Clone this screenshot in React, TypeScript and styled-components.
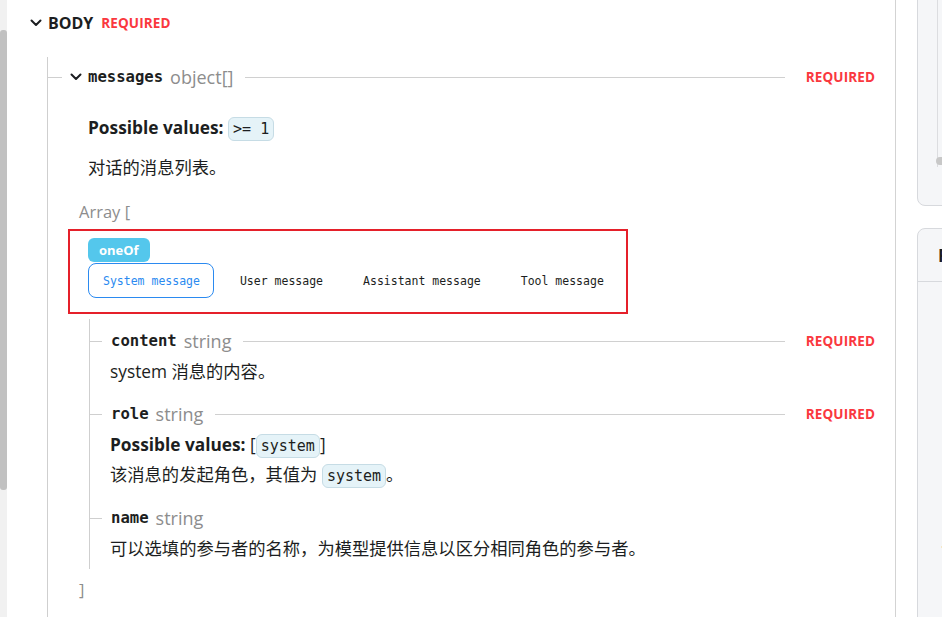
import React from 'react';
import styled, { createGlobalStyle } from 'styled-components';

const SANS = `"Open Sans", "Noto Sans CJK SC", sans-serif`;
const MONO = `"DejaVu Sans Mono", "Noto Sans CJK SC", monospace`;

const Global = createGlobalStyle`
  html, body { margin: 0; padding: 0; background: #fff; }
  body { font-family: ${SANS}; color: #1c1e21; }
  * { box-sizing: border-box; }
`;

const Page = styled.div`
  display: flex;
  width: 942px;
  height: 617px;
  overflow: hidden;
  background: #fff;
`;

const ScrollTrack = styled.div`
  flex: 0 0 7px;
  background: #f1f1f1;
  padding-top: 30px;
`;

const ScrollThumb = styled.div`
  width: 7px;
  height: 460px;
  background: #c1c1c1;
  border-radius: 3px;
`;

const Main = styled.main`
  flex: 0 0 889px;
  border-right: 1px solid #d3d3d3;
  padding: 10px 20px 0 0;
  display: flex;
  flex-direction: column;
`;

const BodyHeader = styled.div`
  display: flex;
  align-items: center;
  height: 26px;
  margin-left: 23px;
`;

const BodyTitle = styled.span`
  font-family: ${SANS};
  font-weight: 700;
  font-size: 16px;
  color: #1c1e21;
  margin-right: 8px;
`;

const Required = styled.span`
  font-family: ${SANS};
  font-weight: 700;
  font-size: 13.5px;
  color: #fa383e;
  letter-spacing: 0.1px;
`;

const Tree = styled.div<{ $indent: number; $top: number; $pad: number; $bottom?: number }>`
  margin-left: ${(p) => p.$indent}px;
  margin-top: ${(p) => p.$top}px;
  padding-top: ${(p) => p.$pad}px;
  padding-bottom: ${(p) => p.$bottom ?? 0}px;
  border-left: 1px solid #cfcfcf;
  display: flex;
  flex-direction: column;
  flex: ${(p) => (p.$bottom === undefined ? 1 : 'none')};
`;

const PropRow = styled.div<{ $top?: number }>`
  display: flex;
  align-items: center;
  height: 24px;
  margin-top: ${(p) => p.$top ?? 0}px;
`;

const Branch = styled.span<{ $w: number; $gap: number }>`
  flex: 0 0 ${(p) => p.$w}px;
  height: 1px;
  background: #cfcfcf;
  margin-right: ${(p) => p.$gap}px;
`;

const Chevron = styled.svg`
  flex: 0 0 12px;
  width: 12px;
  height: 8px;
  margin-right: 6px;
`;

const PropName = styled.span`
  font-family: ${MONO};
  font-weight: 700;
  font-size: 15.6px;
  color: #1c1e21;
  margin-right: 7px;
`;

const PropType = styled.span`
  font-family: ${SANS};
  font-size: 18px;
  color: #8d8d8d;
`;

const Rule = styled.span`
  flex: 1;
  height: 1px;
  background: #d0d0d0;
  margin: 0 21px 0 12px;
`;

const Line = styled.div<{ $indent: number; $top: number; $h?: number }>`
  margin-left: ${(p) => p.$indent}px;
  margin-top: ${(p) => p.$top}px;
  line-height: ${(p) => p.$h ?? 28}px;
  font-family: ${SANS};
  font-size: 17.3px;
  color: #1c1e21;
  white-space: nowrap;
`;

const Strong = styled.strong`
  font-weight: 700;
`;

const Bracket = styled.span`
  color: #8d8d8d;
  font-size: 16.5px;
`;

const Pill = styled.code`
  display: inline-block;
  font-family: ${MONO};
  font-size: 15px;
  line-height: 22px;
  padding: 0 4px;
  background: #e5f3f8;
  border: 1px solid #c6dce5;
  border-radius: 6px;
  color: #1c1e21;
  vertical-align: middle;
`;

const Annotated = styled.div`
  margin-left: 20px;
  margin-top: 5px;
  width: 560px;
  height: 85px;
  border: 2px solid #e5202a;
  padding: 7px 0 0 18px;
  display: flex;
  flex-direction: column;
  align-items: flex-start;
`;

const Badge = styled.span`
  display: inline-flex;
  align-items: center;
  height: 24px;
  padding: 0 11px;
  background: #54c7ec;
  color: #fff;
  border-radius: 6px;
  font-family: ${SANS};
  font-weight: 700;
  font-size: 13px;
`;

const TabList = styled.div`
  display: flex;
  gap: 11px;
  margin-top: 1px;
`;

const Tab = styled.button<{ $active?: boolean }>`
  height: 35px;
  padding: 0 13px 0 14px;
  border: 1px solid ${(p) => (p.$active ? '#2b8af0' : 'transparent')};
  border-radius: 8px;
  background: #fff;
  font-family: ${MONO};
  font-size: 11.5px;
  color: ${(p) => (p.$active ? '#2b8af0' : '#1c1e21')};
  cursor: pointer;
`;

const Gutter = styled.div`
  flex: 0 0 21px;
`;

const Side = styled.aside`
  flex: 0 0 400px;
  display: flex;
  flex-direction: column;
  gap: 22px;
`;

const Panel = styled.div<{ $h: number; $top?: boolean }>`
  flex: 0 0 ${(p) => p.$h}px;
  height: ${(p) => p.$h}px;
  margin-top: ${(p) => (p.$top ? -10 : 0)}px;
  background: #f5f6f8;
  border: 1px solid #d7d9dd;
  border-radius: 8px;
  display: flex;
  flex-direction: column;
  overflow: hidden;
`;

const CodeArea = styled.div`
  margin: 0 0 0 19px;
  height: 176px;
  border-left: 1px solid #dcdde0;
  display: flex;
  flex-direction: column;
  justify-content: flex-end;
  padding-bottom: 2px;
`;

const HScrollDot = styled.div`
  width: 40px;
  height: 8px;
  border-radius: 4px;
  background: #c8c8c8;
  margin-left: -2px;
`;

const PanelHeader = styled.div`
  flex: 0 0 53px;
  border-bottom: 1px solid #d7d9dd;
  display: flex;
  align-items: center;
  padding-left: 20px;
  font-family: ${SANS};
  font-weight: 700;
  font-size: 17px;
  color: #1c1e21;
`;

const PanelBody = styled.div`
  padding: 255px 0 0 23px;
  font-family: ${SANS};
  font-size: 14px;
  color: #1c1e21;
  line-height: 20px;
`;

const ChevronIcon = () => (
  <Chevron viewBox="0 0 12 8">
    <path d="M1.5 1.5 L6 6 L10.5 1.5" fill="none" stroke="#1c1e21" strokeWidth="2" strokeLinecap="round" strokeLinejoin="round" />
  </Chevron>
);

export default function App() {
  return (
    <>
      <Global />
      <Page>
        <ScrollTrack>
          <ScrollThumb />
        </ScrollTrack>
        <Main>
          <BodyHeader>
            <ChevronIcon />
            <BodyTitle>BODY</BodyTitle>
            <Required>REQUIRED</Required>
          </BodyHeader>
          <Tree $indent={40} $top={21} $pad={8}>
            <PropRow>
              <Branch $w={14} $gap={8} />
              <ChevronIcon />
              <PropName>messages</PropName>
              <PropType>object[]</PropType>
              <Rule />
              <Required>REQUIRED</Required>
            </PropRow>
            <Line $indent={40} $top={25}>
              <Strong>Possible values:</Strong> <Pill>&gt;= 1</Pill>
            </Line>
            <Line $indent={40} $top={12}>对话的消息列表。</Line>
            <Line $indent={31} $top={18} $h={24}>
              <Bracket>Array [</Bracket>
            </Line>
            <Annotated>
              <Badge>oneOf</Badge>
              <TabList>
                <Tab $active>System message</Tab>
                <Tab>User message</Tab>
                <Tab>Assistant message</Tab>
                <Tab>Tool message</Tab>
              </TabList>
            </Annotated>
            <Tree $indent={41} $top={5} $pad={10} $bottom={6}>
              <PropRow>
                <Branch $w={12} $gap={9} />
                <PropName>content</PropName>
                <PropType>string</PropType>
                <Rule />
                <Required>REQUIRED</Required>
              </PropRow>
              <Line $indent={20} $top={5}>system 消息的内容。</Line>
              <PropRow $top={16}>
                <Branch $w={12} $gap={9} />
                <PropName>role</PropName>
                <PropType>string</PropType>
                <Rule />
                <Required>REQUIRED</Required>
              </PropRow>
              <Line $indent={20} $top={5}>
                <Strong>Possible values:</Strong> [<Pill>system</Pill>]
              </Line>
              <Line $indent={20} $top={2}>
                该消息的发起角色，其值为 <Pill>system</Pill>。
              </Line>
              <PropRow $top={17}>
                <Branch $w={12} $gap={9} />
                <PropName>name</PropName>
                <PropType>string</PropType>
              </PropRow>
              <Line $indent={20} $top={5}>可以选填的参与者的名称，为模型提供信息以区分相同角色的参与者。</Line>
            </Tree>
            <Line $indent={31} $top={9} $h={24}>
              <Bracket>]</Bracket>
            </Line>
          </Tree>
        </Main>
        <Gutter />
        <Side>
          <Panel $h={216} $top>
            <CodeArea>
              <HScrollDot />
            </CodeArea>
          </Panel>
          <Panel $h={500}>
            <PanelHeader>Request</PanelHeader>
            <PanelBody>· curl</PanelBody>
          </Panel>
        </Side>
      </Page>
    </>
  );
}
